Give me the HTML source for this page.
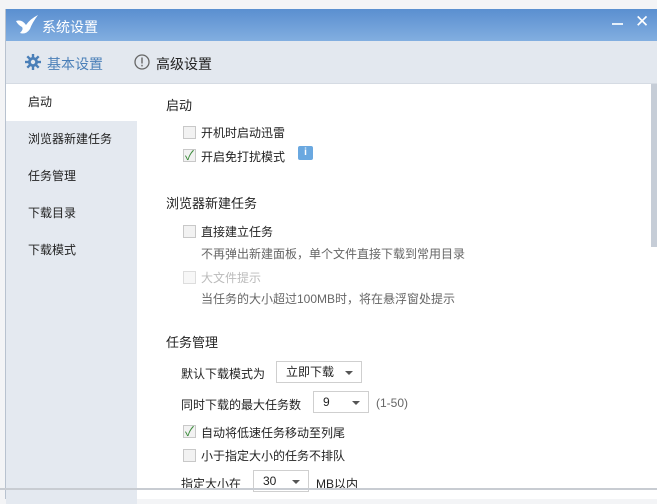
<!DOCTYPE html>
<html><head><meta charset="utf-8"><style>
*{margin:0;padding:0;box-sizing:border-box}
body{width:657px;height:490px;overflow:hidden;background:#f3f4f6;font-family:"Liberation Sans","Noto Sans CJK SC",sans-serif;font-size:12px;color:#222;position:relative}
.win{position:absolute;left:5px;top:9px;width:660px;height:490px;background:#fff;border-left:1px solid #b8c2cf}
.title{height:32px;background:linear-gradient(#5a8fd0,#82aee0);color:#fff;position:relative}
.title span{position:absolute;left:36px;top:8px;font-size:14px}
.tabs{height:43px;background:#e3e8ef;border-bottom:1px solid #d5dbe3;position:relative}
.side{position:absolute;left:0;top:75px;width:131px;height:420px;background:#e4e9f0}
.side div{height:37px;line-height:37px;padding-left:22px}
.side .sel{background:#fff}
.t{position:absolute;white-space:nowrap}
.h{font-size:13px}
.cb{position:absolute;width:13px;height:13px;border:1px solid #c8c8c8;background:#f2f2f2}
.sel2{position:absolute;height:22px;border:1px solid #cfcfcf;background:#fff;padding-left:9px;line-height:20px}
.sel2:after{content:"";position:absolute;right:8px;top:9px;border:4px solid transparent;border-top:4px solid #555;border-bottom:0}
.gray{color:#666}
</style></head><body>
<div class="win">
<div class="title">
<svg style="position:absolute;left:8px;top:4px" width="26" height="24"><path d="M2 8 Q8 6 12 12 Q16 6 24 2 Q18 10 16 16 Q12 22 6 20 Q10 16 8 14 Q4 12 2 8Z" fill="#fff"/></svg>
<span>系统设置</span>
<div style="position:absolute;left:606px;top:14px;width:11px;height:2px;background:#e6f0fa"></div>
<div class="t" style="left:629px;top:3px;color:#fff;font-size:17px">✕</div>
</div>
<div class="tabs">
<svg style="position:absolute;left:18px;top:12px" width="18" height="18" viewBox="0 0 18 18"><g stroke="#4a7fb8" stroke-width="2.4"><line x1="9" y1="1" x2="9" y2="17"/><line x1="1" y1="9" x2="17" y2="9"/><line x1="3.3" y1="3.3" x2="14.7" y2="14.7"/><line x1="14.7" y1="3.3" x2="3.3" y2="14.7"/></g><circle cx="9" cy="9" r="5" fill="#4a7fb8"/><circle cx="9" cy="9" r="2.2" fill="#e3e8ef"/></svg>
<div class="t" style="left:41px;top:13px;font-size:14px;color:#4a7fb8">基本设置</div>
<svg style="position:absolute;left:128px;top:13px" width="16" height="16"><circle cx="8" cy="8" r="7" fill="none" stroke="#666" stroke-width="1.3"/><rect x="7.3" y="3.5" width="1.4" height="6" fill="#666"/><rect x="7.3" y="10.8" width="1.4" height="1.6" fill="#666"/></svg>
<div class="t" style="left:150px;top:13px;font-size:14px">高级设置</div>
</div>
<div class="side"><div class="sel">启动</div><div>浏览器新建任务</div><div>任务管理</div><div>下载目录</div><div>下载模式</div></div>
<div style="position:absolute;left:645px;top:75px;width:7px;height:163px;background:#c6cdd7"></div>
</div>
<div class="t h" style="left:166px;top:95px">启动</div>
<div class="cb" style="left:183px;top:126px"></div><div class="t" style="left:201px;top:124px">开机时启动迅雷</div>
<div class="cb" style="left:183px;top:149px;color:#3a8a3a;font-size:13px;line-height:11px;text-align:center">✓</div><div class="t" style="left:201px;top:148px">开启免打扰模式</div>
<div style="position:absolute;left:298px;top:146px;width:15px;height:14px;background:#6aa8e0;border-radius:2px;color:#fff;font-size:10px;text-align:center;line-height:14px;font-weight:bold">i</div>
<div class="t h" style="left:166px;top:193px">浏览器新建任务</div>
<div class="cb" style="left:183px;top:225px"></div><div class="t" style="left:201px;top:223px">直接建立任务</div>
<div class="t gray" style="left:201px;top:245px">不再弹出新建面板，单个文件直接下载到常用目录</div>
<div class="cb" style="left:183px;top:271px;border-color:#ddd;background:#f7f7f7"></div><div class="t" style="left:201px;top:269px;color:#bbb">大文件提示</div>
<div class="t gray" style="left:201px;top:290px">当任务的大小超过100MB时，将在悬浮窗处提示</div>
<div class="t h" style="left:166px;top:332px">任务管理</div>
<div class="t" style="left:181px;top:365px">默认下载模式为</div>
<div class="sel2" style="left:276px;top:361px;width:86px">立即下载</div>
<div class="t" style="left:181px;top:396px">同时下载的最大任务数</div>
<div class="sel2" style="left:313px;top:391px;width:56px">9</div>
<div class="t gray" style="left:376px;top:396px">(1-50)</div>
<div class="cb" style="left:183px;top:425px;color:#3a8a3a;font-size:13px;line-height:11px;text-align:center">✓</div><div class="t" style="left:201px;top:424px">自动将低速任务移动至列尾</div>
<div class="cb" style="left:183px;top:449px"></div><div class="t" style="left:201px;top:447px">小于指定大小的任务不排队</div>
<div class="t" style="left:181px;top:475px">指定大小在</div>
<div class="sel2" style="left:253px;top:470px;width:56px">30</div>
<div class="t" style="left:316px;top:475px">MB以内</div>
<div style="position:absolute;left:0;top:488px;width:657px;height:2px;background:#c8ccd2"></div>
</body></html>
